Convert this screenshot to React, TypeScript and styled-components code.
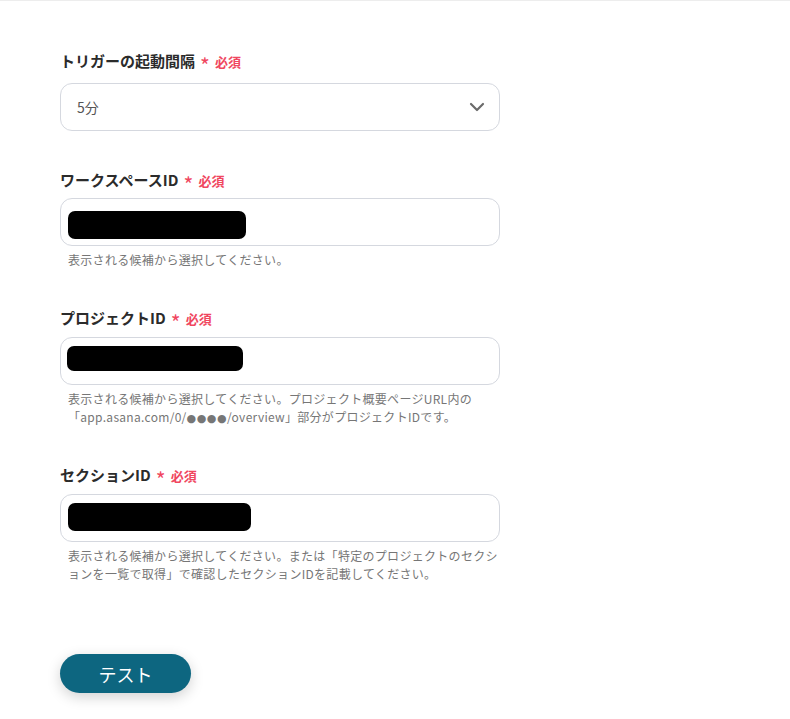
import React from "react";
import styled, { createGlobalStyle } from "styled-components";
import { ChevronDown } from "lucide-react";

const Global = createGlobalStyle`
  html, body { margin: 0; padding: 0; background: #ffffff; }
  body { font-family: "Noto Sans CJK JP", "Noto Sans", sans-serif; }
`;

const Page = styled.div`
  border-top: 1px solid #ededed;
  min-height: 718px;
  padding: 48px 0 0 60px;
  box-sizing: border-box;
`;

const Form = styled.div`
  width: 440px;
  display: flex;
  flex-direction: column;
  gap: 37px;
`;

const Field = styled.div`
  display: flex;
  flex-direction: column;
`;

const Label = styled.div<{ $gap: number }>`
  display: flex;
  align-items: center;
  gap: 5px;
  height: 22px;
  margin-bottom: ${(p) => p.$gap}px;
  font-size: 15px;
  font-weight: 700;
  color: #2b2b2b;
`;

const Required = styled.span`
  display: inline-flex;
  align-items: center;
  gap: 6px;
  color: #f0475f;
  font-size: 13px;
  font-weight: 700;
  padding-top: 2px;
`;

const Star = styled.span`
  display: inline-block;
  width: 9px;
  text-align: center;
  font-size: 21px;
  font-weight: 400;
  line-height: 1;
  transform: translateY(4px);
`;

const Box = styled.div`
  height: 48px;
  box-sizing: border-box;
  border: 1px solid #d5d8df;
  border-radius: 12px;
  background: #fff;
  display: flex;
  align-items: center;
  justify-content: space-between;
  padding: 0 10px 0 16px;
`;

const InputBox = styled.div`
  height: 48px;
  box-sizing: border-box;
  border: 1px solid #d5d8df;
  border-radius: 12px;
  background: #fff;
  display: flex;
  align-items: flex-start;
  padding-left: 6px;
`;

const Value = styled.span`
  font-size: 14px;
  color: #555;
`;

const Redaction = styled.div<{ $w: number; $h: number; $top: number; $left: number }>`
  width: ${(p) => p.$w}px;
  height: ${(p) => p.$h}px;
  margin-top: ${(p) => p.$top}px;
  margin-left: ${(p) => p.$left}px;
  background: #000;
  border-radius: 7px;
`;

const Help = styled.div`
  margin-top: 5px;
  padding-left: 8px;
  font-size: 12px;
  letter-spacing: 0.3px;
  line-height: 18px;
  color: #767676;
`;

const Url = styled.span`
  white-space: nowrap;
`;

const Dots = styled.span`
  font-family: "DejaVu Sans", sans-serif;
  font-size: 11px;
  line-height: 0;
  letter-spacing: 0.5px;
`;

const ButtonRow = styled.div`
  margin-top: 71px;
`;

const TestButton = styled.button`
  width: 131px;
  height: 39px;
  border: none;
  border-radius: 20px;
  background: #0d6680;
  color: #fff;
  font-family: "Noto Sans CJK JP", sans-serif;
  font-size: 18px;
  font-weight: 400;
  box-shadow: 0 4px 14px rgba(0, 0, 0, 0.18);
  cursor: pointer;
`;

const Req = () => (
  <Required>
    <Star>*</Star>必須
  </Required>
);

export default function App() {
  return (
    <>
      <Global />
      <Page>
        <Form>
          <Field>
            <Label $gap={12}>
              トリガーの起動間隔
              <Req />
            </Label>
            <Box>
              <Value>5分</Value>
              <ChevronDown size={24} strokeWidth={2.2} color="#6b6b6b" />
            </Box>
          </Field>
          <Field>
            <Label $gap={8}>
              ワークスペースID
              <Req />
            </Label>
            <InputBox>
              <Redaction $w={178} $h={28} $top={12} $left={1} />
            </InputBox>
            <Help>表示される候補から選択してください。</Help>
          </Field>
          <Field>
            <Label $gap={9}>
              プロジェクトID
              <Req />
            </Label>
            <InputBox>
              <Redaction $w={176} $h={25} $top={8} $left={0} />
            </InputBox>
            <Help>
              表示される候補から選択してください。プロジェクト概要ページURL内の
              <Url>
                「app.asana.com/0/<Dots>●●●●</Dots>/overview」
              </Url>
              部分がプロジェクトIDです。
            </Help>
          </Field>
          <Field>
            <Label $gap={9}>
              セクションID
              <Req />
            </Label>
            <InputBox>
              <Redaction $w={183} $h={28} $top={8} $left={1} />
            </InputBox>
            <Help>
              表示される候補から選択してください。または「特定のプロジェクトのセクションを一覧で取得」で確認したセクションIDを記載してください。
            </Help>
          </Field>
        </Form>
        <ButtonRow>
          <TestButton>テスト</TestButton>
        </ButtonRow>
      </Page>
    </>
  );
}
